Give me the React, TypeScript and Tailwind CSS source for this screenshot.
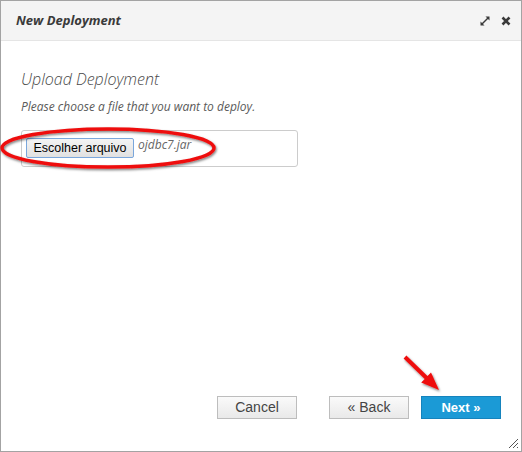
export default function App() {
  return (
    <div className="relative flex h-[452px] w-[522px] flex-col border border-[#a3a3a3] bg-white font-['Open_Sans',sans-serif]">
      <header className="flex h-[40px] shrink-0 items-center justify-between border-b border-[#e5e5e5] bg-[#f4f4f4] pl-[15px] pr-[10px]">
        <h1 className="text-[13px] font-bold italic text-[#3a3a3a]">New Deployment</h1>
        <div className="flex items-center gap-[10px]">
          <svg width="12" height="12" viewBox="0 0 12 12" className="text-[#3a3a3a]">
            <path d="M2.5 9.5 L9.5 2.5" stroke="currentColor" strokeWidth="1.4" />
            <path d="M6.5 1.5 H10.5 V5.5 Z" fill="currentColor" />
            <path d="M1.5 6.5 V10.5 H5.5 Z" fill="currentColor" />
          </svg>
          <svg width="10" height="10" viewBox="0 0 10 10" className="text-[#3a3a3a]">
            <path d="M1.5 1.5 L8.5 8.5 M8.5 1.5 L1.5 8.5" stroke="currentColor" strokeWidth="2.6" />
          </svg>
        </div>
      </header>

      <main className="flex flex-1 flex-col px-[20px] pt-[27px]">
        <h2 className="text-[16px] font-light italic leading-[23px] text-[#4a4a4a]">Upload Deployment</h2>
        <p className="mt-[8px] text-[12px] italic leading-[16px] text-[#5a5a5a]">
          Please choose a file that you want to deploy.
        </p>

        <div className="mt-[15px] flex h-[37px] w-[277px] items-start rounded-[3px] border border-[#cccccc] pl-[4px] pt-[7px]">
          <button className="h-[20px] w-[108px] rounded-[2px] border border-[#7aa7dc] bg-gradient-to-b from-[#f4f4f4] to-[#e1e1e1] font-['Liberation_Sans',sans-serif] text-[12.5px] leading-[18px] text-black">
            Escolher arquivo
          </button>
          <span className="ml-[4px] text-[12px] italic leading-[14px] text-[#666]">ojdbc7.jar</span>
        </div>

        <div className="mt-auto flex justify-end pb-[32px] font-['Liberation_Sans',sans-serif]">
          <button className="h-[23px] w-[80px] border border-[#bdbdbd] bg-gradient-to-b from-[#fafafa] to-[#e9e9e9] text-[14px] text-[#444]">
            Cancel
          </button>
          <button className="ml-[32px] h-[23px] w-[80px] border border-[#bdbdbd] bg-gradient-to-b from-[#fafafa] to-[#e9e9e9] text-[14px] text-[#444]">
            « Back
          </button>
          <button className="ml-[12px] h-[23px] w-[80px] border border-[#1583bd] bg-[#1b9ad6] text-[13px] font-bold text-white">
            Next »
          </button>
        </div>
      </main>

      <svg
        className="pointer-events-none absolute right-[2px] bottom-[2px]"
        width="12"
        height="12"
        viewBox="0 0 12 12"
      >
        <path d="M11 2 L2 11 M11 6 L6 11 M11 10 L10 11" stroke="#555" strokeWidth="1" />
      </svg>

      <svg
        className="pointer-events-none absolute -left-px -top-px"
        width="522"
        height="452"
        viewBox="0 0 522 452"
      >
        <defs>
          <filter id="shadow" x="-10%" y="-30%" width="120%" height="160%">
            <feDropShadow dx="1" dy="1.5" stdDeviation="1.2" floodColor="#000" floodOpacity="0.5" />
          </filter>
        </defs>
        <ellipse cx="108" cy="148" rx="106" ry="19" fill="none" stroke="#ee1111" strokeWidth="3.5" filter="url(#shadow)" />
        <polygon
          points="403.6,358.4 424.7,378.9 421.2,382.5 439,390 431,372.5 427.5,376.1 406.4,355.6"
          fill="#ee1111"
          filter="url(#shadow)"
        />
      </svg>
    </div>
  );
}
